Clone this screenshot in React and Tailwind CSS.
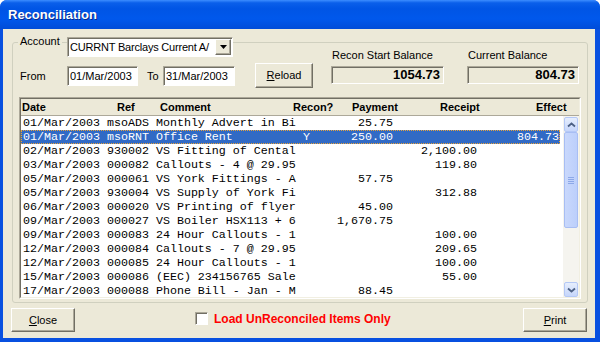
import React from 'react'

const rows = [
  ['01/Mar/2003 msoADS Monthly Advert in Bi', '', '25.75', '', ''],
  ['01/Mar/2003 msoRNT Office Rent', 'Y', '250.00', '', '804.73'],
  ['02/Mar/2003 930002 VS Fitting of Cental', '', '', '2,100.00', ''],
  ['03/Mar/2003 000082 Callouts - 4 @ 29.95', '', '', '119.80', ''],
  ['05/Mar/2003 000061 VS York Fittings - A', '', '57.75', '', ''],
  ['05/Mar/2003 930004 VS Supply of York Fi', '', '', '312.88', ''],
  ['06/Mar/2003 000020 VS Printing of flyer', '', '45.00', '', ''],
  ['09/Mar/2003 000027 VS Boiler HSX113 + 6', '', '1,670.75', '', ''],
  ['09/Mar/2003 000083 24 Hour Callouts - 1', '', '', '100.00', ''],
  ['12/Mar/2003 000084 Callouts - 7 @ 29.95', '', '', '209.65', ''],
  ['12/Mar/2003 000085 24 Hour Callouts - 1', '', '', '100.00', ''],
  ['15/Mar/2003 000086 (EEC) 234156765 Sale', '', '', '55.00', ''],
  ['17/Mar/2003 000088 Phone Bill - Jan - M', '', '88.45', '', ''],
]

const sunken = 'border border-t-[#ACA899] border-l-[#ACA899] border-b-white border-r-white shadow-[inset_1px_1px_0_#716F64]'
const raised = 'border border-t-white border-l-white border-b-[#716F64] border-r-[#716F64] shadow-[inset_-1px_-1px_0_#ACA899] bg-[#ECE9D8]'

const Chevron = ({ down }) => (
  <svg width="9" height="6" viewBox="0 0 9 6">
    <path d={down ? 'M1 1.5 L4.5 4.5 L8 1.5' : 'M1 4.5 L4.5 1.5 L8 4.5'} fill="none" stroke="#4D6185" strokeWidth="1.8" />
  </svg>
)

const ScrollBtn = ({ down }) => (
  <div className="h-[15px] mx-[1px] rounded-[2px] border border-[#B4C8F6] bg-[linear-gradient(180deg,#E6EEFD_0%,#C6D6FB_100%)] flex items-center justify-center">
    <Chevron down={down} />
  </div>
)

const Balance = ({ label, value, className }) => (
  <div className={`mt-[11px] flex flex-col ${className}`}>
    <span className="pl-[1px] leading-[14px]">{label}</span>
    <div className={`mt-[4px] h-[18px] ${sunken} bg-[#ECE9D8] flex items-center justify-end pr-[3px] font-bold text-[13px]`}>
      {value}
    </div>
  </div>
)

const App = () => {
  return (
    <div className="w-[600px] h-[342px] flex flex-col bg-[#0850E0] rounded-t-[7px] overflow-hidden font-['Liberation_Sans',Arial,sans-serif] text-[11px] text-black">
      <div className="h-[29px] shrink-0 flex items-center pl-[8px] bg-[linear-gradient(180deg,#3C8DFF_0%,#0A5FEA_10%,#0055E5_30%,#0058EC_65%,#004CD8_100%)]">
        <span className="text-white font-bold text-[13px] [text-shadow:1px_1px_0_#0A2A8A]">Reconciliation</span>
      </div>

      <div className="flex-1 ml-[3px] mr-[5px] mb-[4px] bg-[#ECE9D8] flex flex-col">
        <div className="ml-[9px] mt-[13px] w-[576px] border border-[#D0D0BF] rounded-[3px] pb-[3px]">
          <div className="-mt-[6px] flex items-start">
            <div className="flex flex-col">
              <div className="flex items-start h-[20px]">
                <span className="ml-[5px] -mt-[2px] w-[44px] px-[2px] bg-[#ECE9D8] leading-[13px]">Account</span>
                <div className={`ml-[5px] w-[166px] h-[20px] bg-white ${sunken} flex items-center`}>
                  <span className="pl-[2px] flex-1 whitespace-nowrap overflow-hidden tracking-[-0.2px]">CURRNT Barclays Current A/</span>
                  <div className={`w-[16px] h-[16px] mr-[1px] ${raised} flex items-center justify-center`}>
                    <svg width="7" height="4" viewBox="0 0 7 4"><path d="M0 0 H7 L3.5 4 Z" fill="#000" /></svg>
                  </div>
                </div>
              </div>
              <div className="flex items-center mt-[9px] h-[20px]">
                <span className="ml-[7px] w-[47px]">From</span>
                <div className={`w-[71px] h-[20px] bg-white ${sunken} flex items-center pl-[2px]`}>01/Mar/2003</div>
                <span className="ml-[9px] w-[16px]">To</span>
                <div className={`w-[72px] h-[20px] bg-white ${sunken} flex items-center pl-[2px]`}>31/Mar/2003</div>
              </div>
            </div>
            <button className={`ml-[20px] mt-[26px] w-[58px] h-[25px] ${raised}`}>
              <span className="underline">R</span>eload
            </button>
            <Balance label="Recon Start Balance" value="1054.73" className="ml-[18px] w-[113px]" />
            <Balance label="Current Balance" value="804.73" className="ml-[23px] w-[112px]" />
          </div>

          <div className="mt-[9px] ml-[6px] w-[562px] border border-t-[#ACA899] border-l-[#ACA899] border-b-white border-r-white">
            <div className="border border-t-[#716F64] border-l-[#716F64] border-b-[#F1EFE2] border-r-[#F1EFE2] bg-white">
              <div className="h-[17px] flex items-center pl-[1px] bg-[#ECE9D8] border-b border-[#ACA899] font-bold whitespace-nowrap">
                <span className="w-[95px]">Date</span>
                <span className="w-[43px]">Ref</span>
                <span className="w-[133px]">Comment</span>
                <span className="w-[59px]">Recon?</span>
                <span className="w-[88px]">Payment</span>
                <span className="w-[96px]">Receipt</span>
                <span>Effect</span>
              </div>
              <div className="flex h-[181px]">
                <div className="flex-1 font-['Liberation_Mono','Courier_New',monospace] text-[11.67px] leading-[14px]">
                  {rows.map((r, i) => (
                    <div
                      key={i}
                      className={`h-[14px] w-[539px] flex whitespace-pre ${i === 1 ? 'bg-[#316AC5] text-white outline-1 outline-dotted outline-[#E8A33A] -outline-offset-1' : ''}`}
                    >
                      <span className="w-[282px] pl-[2px]">{r[0]}</span>
                      <span className="w-[20px]">{r[1]}</span>
                      <span className="w-[70px] text-right">{r[2]}</span>
                      <span className="w-[84px] text-right">{r[3]}</span>
                      <span className="w-[82px] text-right">{r[4]}</span>
                    </div>
                  ))}
                </div>
                <div className="w-[16px] flex flex-col bg-[#F5F4EF] pt-[1px]">
                  <ScrollBtn />
                  <div className="h-[96px] mx-[1px] rounded-[2px] border border-[#A8BEF3] bg-[linear-gradient(90deg,#C9D8FC_0%,#BCCFFB_100%)] flex flex-col items-center justify-center gap-[1px]">
                    {[0, 1, 2, 3].map(k => (
                      <div key={k} className="w-[6px] h-[1px] bg-[#EEF3FE] border-b border-[#8CA8E8]" />
                    ))}
                  </div>
                  <div className="flex-1" />
                  <ScrollBtn down />
                </div>
              </div>
            </div>
          </div>
        </div>

        <div className="mt-[5px] flex items-center h-[24px]">
          <button className={`ml-[8px] w-[64px] h-[24px] ${raised}`}>
            <span className="underline">C</span>lose
          </button>
          <div className="ml-[120px] mb-[3px] flex items-center">
            <div className={`w-[13px] h-[13px] bg-white ${sunken}`} />
            <span className="ml-[6px] text-[12px] font-bold text-[#FF0000]">Load UnReconciled Items Only</span>
          </div>
          <button className={`ml-auto mr-[8px] w-[64px] h-[24px] ${raised}`}>
            <span className="underline">P</span>rint
          </button>
        </div>
      </div>
    </div>
  )
}

export default App
